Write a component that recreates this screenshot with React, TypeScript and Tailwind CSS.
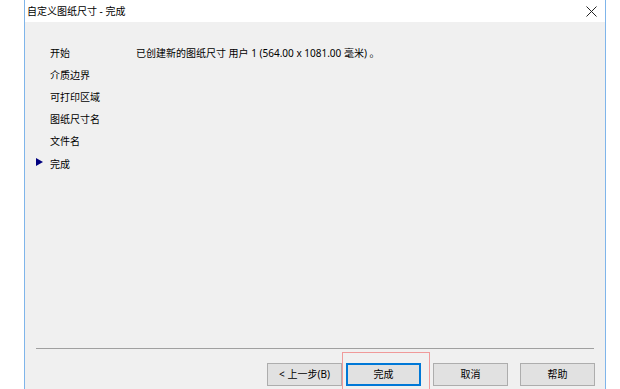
const STEPS = ['开始', '介质边界', '可打印区域', '图纸尺寸名', '文件名', '完成'];
const CURRENT = 5;

const BUTTONS = [
  { label: '< 上一步(B)', primary: false },
  { label: '完成', primary: true },
  { label: '取消', primary: false },
  { label: '帮助', primary: false },
];

function CloseIcon() {
  return (
    <svg width="11" height="11" viewBox="0 0 11 11" aria-hidden>
      <path d="M0.5 0.5 L10.5 10.5 M10.5 0.5 L0.5 10.5" stroke="#222" strokeWidth="1" fill="none" />
    </svg>
  );
}

export default function App() {
  return (
    <div
      className="flex h-[389px] w-[620px] overflow-hidden bg-white text-[10px] text-black"
      style={{ fontFamily: '"Noto Sans", "Noto Sans CJK SC", sans-serif' }}
    >
      <div className="w-[24px] shrink-0" />
      <div className="flex w-[582px] shrink-0 flex-col border-x border-[#7fb5ea]">
        {/* title bar */}
        <div className="flex h-[22px] shrink-0 items-center justify-between bg-white pl-[2px] pr-[8px]">
          <span className="leading-none">自定义图纸尺寸 - 完成</span>
          <CloseIcon />
        </div>

        {/* body */}
        <div className="flex flex-1 flex-col bg-[#f0f0f0]">
          <div className="flex flex-1 pt-[20px]">
            <ul className="w-[111px] shrink-0 pl-[11px]">
              {STEPS.map((step, i) => (
                <li key={step} className="flex h-[22.2px] items-center">
                  <span className="flex w-[14px] items-center">
                    {i === CURRENT && (
                      <svg width="7" height="8" viewBox="0 0 7 8" aria-hidden className="-mt-[5px]">
                        <path d="M0 0 L7 4 L0 8 Z" fill="#00007f" />
                      </svg>
                    )}
                  </span>
                  <span>{step}</span>
                </li>
              ))}
            </ul>
            <p className="flex h-[22px] items-center">
              已创建新的图纸尺寸 用户 1 (564.00 x 1081.00 毫米) 。
            </p>
          </div>

          <div className="mx-[11px] h-px bg-[#a0a0a0]" />

          <div className="relative flex justify-end gap-[12px] pr-[10px] pt-[14px] pb-[3px]">
            {BUTTONS.map((b) => (
              <button
                key={b.label}
                className={
                  b.primary
                    ? '-ml-[8px] h-[23px] w-[75px] border border-[#0078d7] bg-[#e1e1e1] shadow-[inset_0_0_0_1px_#0078d7]'
                    : 'h-[23px] w-[75px] border border-[#adadad] bg-[#e1e1e1]'
                }
              >
                {b.label}
              </button>
            ))}
            <div className="pointer-events-none absolute left-[317px] top-[3px] h-[40px] w-[88px] border border-[#f09a9a]" />
          </div>
        </div>
      </div>
    </div>
  );
}
